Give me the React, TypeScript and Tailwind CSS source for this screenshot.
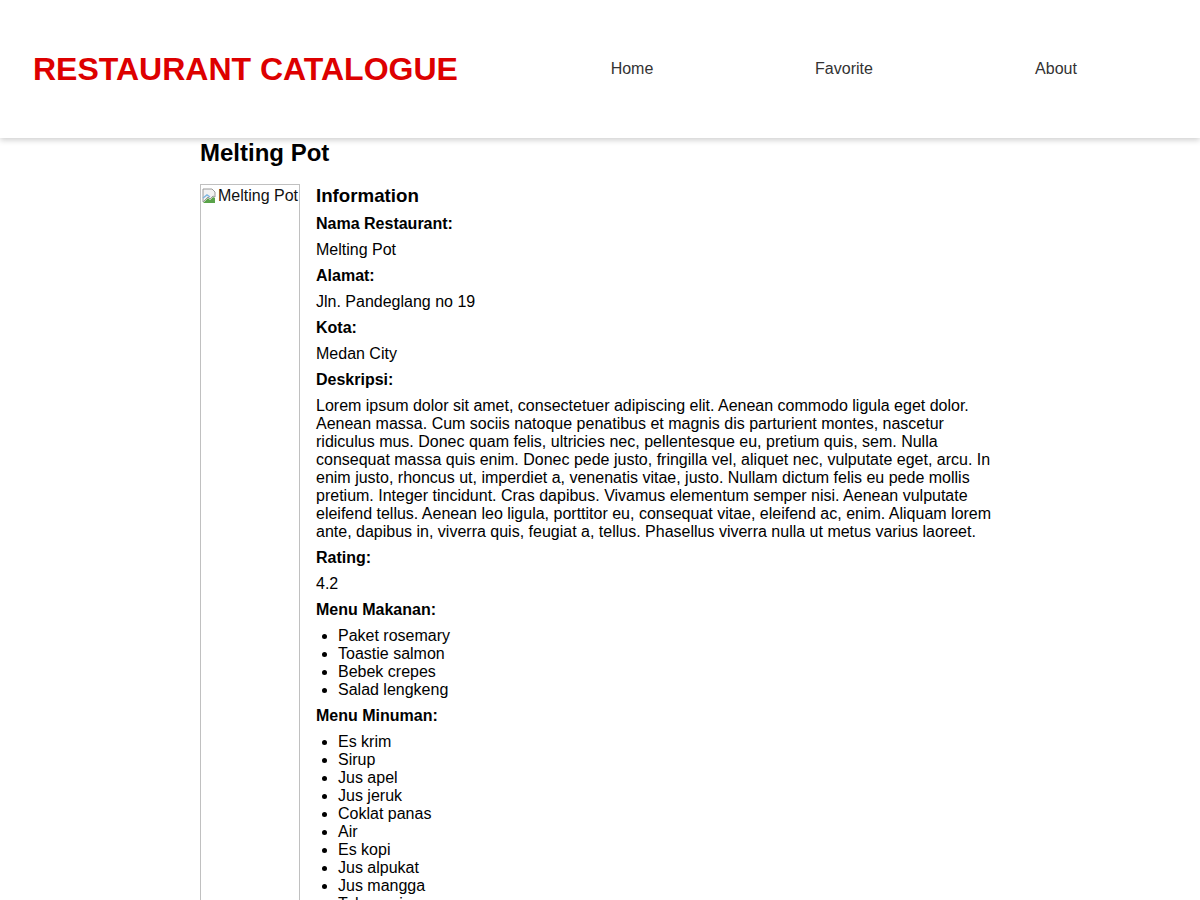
import React from "react";

const menuMakanan = ["Paket rosemary", "Toastie salmon", "Bebek crepes", "Salad lengkeng"];
const menuMinuman = [
  "Es krim",
  "Sirup",
  "Jus apel",
  "Jus jeruk",
  "Coklat panas",
  "Air",
  "Es kopi",
  "Jus alpukat",
  "Jus mangga",
  "Teh manis",
  "Kopi",
  "Teh",
];

const deskripsi =
  "Lorem ipsum dolor sit amet, consectetuer adipiscing elit. Aenean commodo ligula eget dolor. Aenean massa. Cum sociis natoque penatibus et magnis dis parturient montes, nascetur ridiculus mus. Donec quam felis, ultricies nec, pellentesque eu, pretium quis, sem. Nulla consequat massa quis enim. Donec pede justo, fringilla vel, aliquet nec, vulputate eget, arcu. In enim justo, rhoncus ut, imperdiet a, venenatis vitae, justo. Nullam dictum felis eu pede mollis pretium. Integer tincidunt. Cras dapibus. Vivamus elementum semper nisi. Aenean vulputate eleifend tellus. Aenean leo ligula, porttitor eu, consequat vitae, eleifend ac, enim. Aliquam lorem ante, dapibus in, viverra quis, feugiat a, tellus. Phasellus viverra nulla ut metus varius laoreet.";

// broken-image placeholder, like the browser draws for a missing src
const BrokenImage = () => (
  <svg width="16" height="16" viewBox="0 0 16 16" className="inline-block shrink-0 mt-[1px]">
    <path d="M1 1h9l3 3v5l-2 -1-3 3-2-2-5 5z" fill="#f2f2f2" stroke="#9a9a9a" strokeWidth="1" />
    <path d="M1 15l5-5 2 2 3-3 2 1v5H1z" fill="#5aa34a" />
    <path d="M1 10l4-3 3 2" fill="none" stroke="#7fb6e0" strokeWidth="1.5" />
  </svg>
);

const Label = ({ children }: { children: React.ReactNode }) => (
  <p className="font-bold leading-[18px] my-2">{children}</p>
);

export default function App() {
  return (
    <div className="min-h-screen bg-white text-black font-['Liberation_Sans',Arial,sans-serif] text-base">
      <header className="h-[138px] flex items-center pl-[33px] shadow-[0_2px_6px_rgba(0,0,0,0.2)] relative z-10 bg-white">
        <h1 className="text-[32px] font-bold text-[#dd0000] leading-none">RESTAURANT CATALOGUE</h1>
        <nav className="ml-auto mr-[38px]">
          <ul className="flex">
            {["Home", "Favorite", "About"].map((item) => (
              <li key={item} className="w-[212px] text-center">
                <a href="#" className="text-[#333] leading-[18px]">
                  {item}
                </a>
              </li>
            ))}
          </ul>
        </nav>
      </header>

      <main className="ml-[200px] w-[800px] pt-[1px]">
        <h2 className="text-2xl font-bold leading-[28px] mb-[17px]">Melting Pot</h2>
        <div className="flex gap-4">
          <div className="w-[100px] shrink-0 border border-[#c0c0c0] self-stretch">
            <div className="flex items-start leading-[18px] pt-[2px] pl-[1px] text-[#111]">
              <BrokenImage />
              <span className="whitespace-nowrap">Melting Pot</span>
            </div>
          </div>
          <div className="flex-1">
            <h3 className="text-[18.72px] font-bold leading-[23px]">Information</h3>
            <Label>Nama Restaurant:</Label>
            <p className="leading-[18px] my-2">Melting Pot</p>
            <Label>Alamat:</Label>
            <p className="leading-[18px] my-2">Jln. Pandeglang no 19</p>
            <Label>Kota:</Label>
            <p className="leading-[18px] my-2">Medan City</p>
            <Label>Deskripsi:</Label>
            <p className="leading-[18px] my-2">{deskripsi}</p>
            <Label>Rating:</Label>
            <p className="leading-[18px] my-2">4.2</p>
            <Label>Menu Makanan:</Label>
            <ul className="list-disc pl-[22px] leading-[18px] my-2">
              {menuMakanan.map((m) => (
                <li key={m}>{m}</li>
              ))}
            </ul>
            <Label>Menu Minuman:</Label>
            <ul className="list-disc pl-[22px] leading-[18px] my-2">
              {menuMinuman.map((m) => (
                <li key={m}>{m}</li>
              ))}
            </ul>
          </div>
        </div>
      </main>
    </div>
  );
}
